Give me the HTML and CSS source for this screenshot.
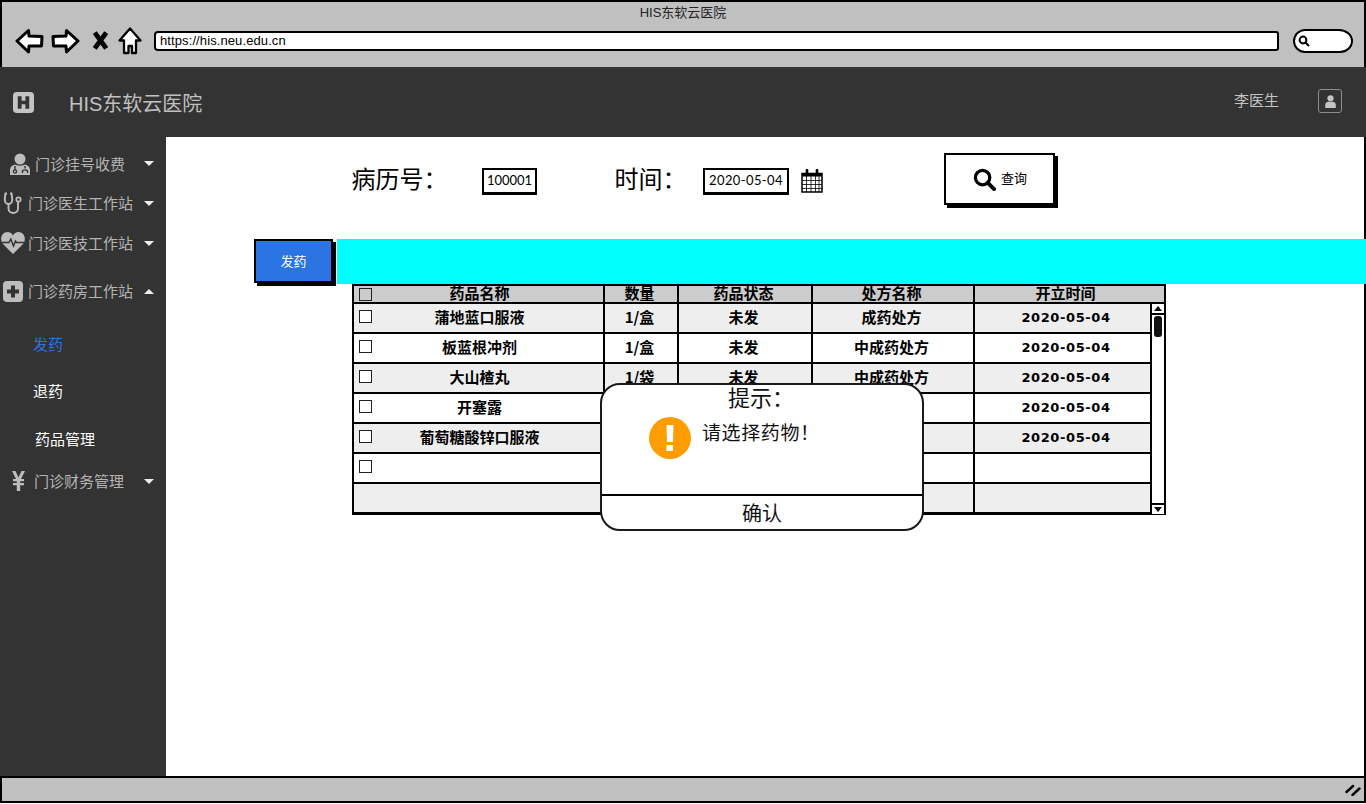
FILE: index.html
```html
<!DOCTYPE html>
<html lang="zh">
<head>
<meta charset="utf-8">
<title>HIS东软云医院</title>
<link rel="stylesheet" href="styles.css">
</head>
<body>
<div class="window">
  <div class="chrome">
    <div class="chrome-title">HIS东软云医院</div>
    <div class="chrome-bar">
      <svg class="c-icon c-arrow" viewBox="0 0 28 26"><path d="M1.500 13 13 2.500 13.500 8 26.500 8.500 26 18 13.500 18 13 24z" fill="#fff" stroke="#000" stroke-width="3" stroke-linejoin="round"/></svg>
      <svg class="c-icon c-arrow" viewBox="0 0 28 26"><path d="M26.500 13 15 2.500 14.500 8 1.500 8.500 2 18 14.500 18 15 24z" fill="#fff" stroke="#000" stroke-width="3" stroke-linejoin="round"/></svg>
      <svg class="c-icon c-x" viewBox="0 0 16 20"><path d="M2.500 2.500 13.500 17.500M13.500 2.500 2.500 17.500" stroke="#000" stroke-width="4.600" fill="none"/></svg>
      <svg class="c-icon c-home" viewBox="0 0 24 28"><path d="M12 1.500 1.500 13.500H6V26h4.500v-7h3.500v7H18V13.500h4.500z" fill="#fff" stroke="#000" stroke-width="2.300" stroke-linejoin="round"/></svg>
      <div class="url">https://his.neu.edu.cn</div>
      <div class="pill">
        <svg class="pill-icon" viewBox="0 0 12 12"><circle cx="5" cy="5" r="3.400" fill="none" stroke="#000" stroke-width="2"/><path d="M7.500 7.500 11 11" stroke="#000" stroke-width="2.200"/></svg>
      </div>
    </div>
  </div>

  <header class="topbar">
    <svg class="logo" viewBox="0 0 22 22"><rect width="22" height="22" rx="4" fill="#c4c4c4"/><path d="M5 4.500h4v4.700h4V4.500h4v13h-4v-4.600H9v4.600H5z" fill="#333"/></svg>
    <div class="brand">HIS东软云医院</div>
    <div class="user-name">李医生</div>
    <div class="user-box">
      <svg viewBox="0 0 16 18" class="user-icon"><circle cx="8" cy="5" r="3.800" fill="#c4c4c4"/><path d="M1.500 17v-4c0-2.500 2-3.800 3.800-3.800h5.400c1.800 0 3.800 1.300 3.800 3.800v4z" fill="#c4c4c4"/></svg>
    </div>
  </header>

  <div class="body">
    <nav class="sidebar">
      <div class="nav-item n1">
        <svg class="n-icon i-doc" viewBox="0 0 20 22"><circle cx="10" cy="6" r="5.500" fill="#bdbdbd"/><path d="M0 22v-5c0-3 2.500-5 5-5.500 2 1.500 8 1.500 10 0 2.500.5 5 2.500 5 5.500v5z" fill="#bdbdbd"/><path d="M5 13v4M15 13v2.500M12.500 20v-2c0-1.500 5-1.500 5 0v2" stroke="#333" stroke-width="1.400" fill="none"/><circle cx="5" cy="18.500" r="1.600" fill="none" stroke="#333" stroke-width="1.300"/></svg>
        <span class="nav-label">门诊挂号收费</span><i class="caret"></i>
      </div>
      <div class="nav-item n2">
        <svg class="n-icon i-steth" viewBox="0 0 20 23"><path d="M4 1.500H2.500C2 5 1 8 2.500 10.500c1.500 2 4.500 2 6 0C10 8 9 5 8.500 1.500H7" fill="none" stroke="#bdbdbd" stroke-width="1.900"/><path d="M5.500 12v4.500c0 6 9.500 6 9.500 0V10" fill="none" stroke="#bdbdbd" stroke-width="1.900"/><circle cx="15.500" cy="7.500" r="2.200" fill="none" stroke="#bdbdbd" stroke-width="1.700"/></svg>
        <span class="nav-label">门诊医生工作站</span><i class="caret"></i>
      </div>
      <div class="nav-item n3">
        <svg class="n-icon i-heart" viewBox="0 0 24 22"><path d="M12 22 2 12C-2 7 1 0 6.500 0 9 0 11 1.500 12 3.500 13 1.500 15 0 17.500 0 23 0 26 7 22 12z" fill="#bdbdbd"/><path d="M1 10.500h7l1.800-3.500 2.700 7 2-5 1 1.500h7.500" fill="none" stroke="#333" stroke-width="1.500"/></svg>
        <span class="nav-label">门诊医技工作站</span><i class="caret"></i>
      </div>
      <div class="nav-item n4">
        <svg class="n-icon i-plus" viewBox="0 0 20 21"><rect width="20" height="21" rx="4" fill="#bdbdbd"/><path d="M8 4.500h4v4h4v4h-4v4H8v-4H4v-4h4z" fill="#333"/></svg>
        <span class="nav-label">门诊药房工作站</span><i class="caret up"></i>
      </div>
      <div class="nav-item n5"><span class="sub active">发药</span></div>
      <div class="nav-item n6"><span class="sub">退药</span></div>
      <div class="nav-item n7"><span class="sub">药品管理</span></div>
      <div class="nav-item n8">
        <svg class="n-icon i-yen" viewBox="0 0 13 20"><path d="M0 0h3.500l3 6.500 3-6.500H13L9 8h3v2.300H8.200v1.700H12v2.300H8.200V20H4.800v-5.700H1V12h3.800v-1.700H1V8h3z" fill="#bdbdbd"/></svg>
        <span class="nav-label">门诊财务管理</span><i class="caret"></i>
      </div>
    </nav>

    <main class="main">
      <div class="search-row">
        <label class="field-label fl-id">病历号：</label>
        <div class="input in-id">100001</div>
        <label class="field-label fl-time">时间：</label>
        <div class="input in-date">2020-05-04</div>
        <svg class="cal" viewBox="0 0 22 24"><path d="M1 4.500h20V23H1z" fill="none" stroke="#000" stroke-width="1.500"/><path d="M1 4h20v3.500H1z" fill="#000"/><path d="M6 1v5M16 1v5" stroke="#000" stroke-width="2.600" stroke-linecap="round"/><path d="M1 11.500h20M1 15.500h20M1 19.500h20M5.500 7v16M10 7v16M14.500 7v16M18 7v16" stroke="#000" stroke-width=".8"/></svg>
        <button class="query">
          <svg class="q-icon" viewBox="0 0 24 24"><circle cx="10" cy="10" r="7.500" fill="none" stroke="#000" stroke-width="3.400"/><path d="M15.500 15.500 22 22" stroke="#000" stroke-width="4" stroke-linecap="round"/></svg>
          <span class="q-text">查询</span>
        </button>
      </div>

      <div class="action-row">
        <button class="dispense">发药</button>
        <div class="cyan"></div>
      </div>

      <div class="table">
        <div class="th name"><i class="box"></i>药品名称</div>
        <div class="th">数量</div>
        <div class="th">药品状态</div>
        <div class="th">处方名称</div>
        <div class="th th-last">开立时间</div>

        <div class="td name odd"><i class="box"></i>蒲地蓝口服液</div><div class="td odd">1/盒</div><div class="td odd">未发</div><div class="td odd">成药处方</div><div class="td date odd">2020-05-04</div>
        <div class="scroll">
          <div class="sb-btn"><i class="tri-up"></i></div>
          <div class="sb-track"><div class="thumb"></div></div>
          <div class="sb-btn down"><i class="tri-down"></i></div>
        </div>
        <div class="td name"><i class="box"></i>板蓝根冲剂</div><div class="td">1/盒</div><div class="td">未发</div><div class="td">中成药处方</div><div class="td date">2020-05-04</div>
        <div class="td name odd"><i class="box"></i>大山楂丸</div><div class="td odd">1/袋</div><div class="td odd">未发</div><div class="td odd">中成药处方</div><div class="td date odd">2020-05-04</div>
        <div class="td name"><i class="box"></i>开塞露</div><div class="td"></div><div class="td"></div><div class="td"></div><div class="td date">2020-05-04</div>
        <div class="td name odd"><i class="box"></i>葡萄糖酸锌口服液</div><div class="td odd"></div><div class="td odd"></div><div class="td odd"></div><div class="td date odd">2020-05-04</div>
        <div class="td name"><i class="box"></i></div><div class="td"></div><div class="td"></div><div class="td"></div><div class="td"></div>
        <div class="td name odd last"></div><div class="td odd last"></div><div class="td odd last"></div><div class="td odd last"></div><div class="td odd last"></div>
      </div>

      <div class="dialog">
        <div class="dlg-title">提示：</div>
        <div class="dlg-body">
          <svg class="warn" viewBox="0 0 42 42"><circle cx="21" cy="21" r="21" fill="#ff9d00"/><path d="M17.500 8h7l-.5 17h-6zM17.500 28h6.500v6h-6.500z" fill="#fff"/></svg>
          <div class="dlg-text">请选择药物！</div>
        </div>
        <div class="dlg-ok">确认</div>
      </div>
    </main>
  </div>

  <footer class="statusbar">
    <svg class="grip" viewBox="0 0 16 12"><path d="M1.500 8 8 2M7.500 11 14.500 4.500" stroke="#000" stroke-width="2.400" stroke-linecap="round"/></svg>
  </footer>
</div>
</body>
</html>
```

FILE: styles.css
```css
* { box-sizing: border-box; }
html, body { margin: 0; padding: 0; background: #fff; }
body { width: 1366px; height: 804px; overflow: hidden; font-family: "Noto Sans CJK SC", "Liberation Sans", sans-serif; }
.window { width: 1366px; height: 803px; display: flex; flex-direction: column; }

/* browser chrome */
.chrome { height: 67px; background: #c0c0c0; border: 2px solid #000; border-bottom: 0; flex: none; }
.chrome-title { height: 23px; text-align: center; font: 13px/22px "Liberation Sans", "Noto Sans CJK SC", sans-serif; color: #222; }
.chrome-bar { display: flex; align-items: center; height: 30px; padding: 1px 0 0 13px; }
.c-icon { flex: none; display: block; }
.c-arrow { width: 29px; height: 26px; margin-right: 7px; }
.c-x { width: 17px; height: 21px; margin: 0 9px 0 5px; }
.c-home { width: 24px; height: 28px; margin-right: 12px; }
.url { width: 1125px; height: 20px; background: #fff; border: 2px solid #000; border-radius: 4px 3px 3px 4px; font: 13px/15px "Liberation Sans", sans-serif; letter-spacing: .1px; color: #000; padding-left: 4px; flex: none; }
.pill { width: 60px; height: 24px; margin-left: 14px; background: #fff; border: 2px solid #000; border-radius: 12px 14px 13px 12px / 12px; flex: none; display: flex; align-items: center; padding-left: 3px; }
.pill-icon { width: 12px; height: 12px; }

/* header */
.topbar { height: 70px; background: #333; flex: none; display: flex; align-items: center; padding-left: 13px; }
.logo { width: 21px; height: 21px; flex: none; }
.brand { margin-left: 35px; margin-top: 4px; width: 1165px; font: 20px/28px "Liberation Sans", "Noto Sans CJK SC", sans-serif; color: #c0c0c0; flex: none; }
.user-name { width: 84px; margin-top: -5px; font-size: 15px; line-height: 20px; color: #c4c4c4; flex: none; }
.user-box { width: 24px; height: 24px; margin-top: -2px; border: 1.500px solid #8e8e8e; border-radius: 3px; flex: none; display: flex; align-items: center; justify-content: center; }
.user-icon { width: 13px; height: 15px; }

.body { flex: 1; display: flex; min-height: 0; }

/* sidebar */
.sidebar { width: 166px; background: #333; flex: none; padding-top: 6px; }
.nav-item { display: flex; align-items: center; }
.n1 { height: 41px; padding-left: 10px; }
.n2 { height: 38px; padding-left: 3px; }
.n3 { height: 42px; padding-left: 1px; }
.n4 { height: 54px; padding-left: 3px; }
.n5 { height: 52px; padding-left: 33px; }
.n6 { height: 42px; padding-left: 33px; }
.n7 { height: 54px; padding-left: 35px; }
.n8 { height: 30px; padding-left: 12px; }
.n-icon { flex: none; display: block; }
.i-doc { width: 20px; height: 22px; margin-right: 5px; }
.i-steth { width: 20px; height: 23px; margin-right: 5px; }
.i-heart { width: 24px; height: 22px; margin-right: 3px; }
.i-plus { width: 20px; height: 21px; margin-right: 5px; }
.i-yen { width: 13px; height: 20px; margin-right: 9px; }
.nav-label { font-size: 15px; line-height: 20px; color: #b4b4b4; flex: 1; white-space: nowrap; }
.sub { font-size: 15px; line-height: 20px; color: #fff; }
.sub.active { color: #2b74e4; }
.caret { flex: none; width: 0; height: 0; margin-right: 12px; border-left: 5px solid transparent; border-right: 5px solid transparent; border-top: 5px solid #eee; }
.caret.up { border-top: 0; border-bottom: 5px solid #eee; }

/* main */
.main { flex: 1; background: #fff; border-right: 2px solid #000; position: relative; min-width: 0; }
.search-row { height: 71px; padding: 16px 0 0 186px; display: flex; align-items: flex-start; margin-bottom: 31px; }
.field-label { font-size: 24px; line-height: 36px; color: #000; flex: none; margin: 7px 0 0 -.5px; white-space: nowrap; }
.fl-id { width: 130.5px; }
.fl-time { width: 88.5px; }
.input { flex: none; height: 26px; margin-top: 15px; border: 2px solid #000; background: #fff; font: 13px/21px "Lato", "Liberation Sans", sans-serif; color: #000; text-align: center; box-shadow: 0 1px 0 #000; white-space: nowrap; }
.in-id { width: 55px; margin-right: 78px; }
.in-date { width: 86px; margin-right: 12px; letter-spacing: .4px; }
.cal { width: 22px; height: 24px; flex: none; margin: 16px 121px 0 0; }
.query { width: 111px; height: 52px; flex: none; border: 2px solid #000; background: #fff; box-shadow: 3px 3px 0 #000; padding: 0 0 0 27px; display: flex; align-items: center; font: 13px/18px "Noto Sans CJK SC", sans-serif; color: #000; }
.q-icon { width: 23px; height: 23px; margin-right: 5px; }
.q-text { margin-top: -3px; }

.action-row { display: flex; height: 45px; margin-right: -2px; padding-left: 88px; }
.dispense { width: 79px; height: 44px; flex: none; background: #2b74e4; border: 2px solid #000; box-shadow: 3px 3px 0 #000; color: #fff; font: 13px/18px "Noto Sans CJK SC", sans-serif; padding: 0; }
.cyan { flex: 1; margin-left: 4px; background: #0ff; }

/* table */
.table { width: 814px; margin-left: 186px; display: grid; grid-template-columns: 251px 74px 134px 162px 177px 12px; grid-template-rows: 18px repeat(7, 30px); border: 2px solid #000; border-bottom-width: 1px; }
.th, .td { display: flex; align-items: center; justify-content: center; border-right: 2px solid #000; border-bottom: 2px solid #000; font-size: 15px; font-weight: 700; color: #000; white-space: nowrap; position: relative; min-width: 0; padding-right: 3px; }
.th { background: #ccc; line-height: 15px; padding-bottom: 4px; }
.th-last { grid-column: span 2; border-right: 0; padding-right: 8px; }
.td { background: #fff; line-height: 20px; padding-bottom: 2px; }
.td.odd { background: #eee; }
.td.date { font-family: "DejaVu Sans", sans-serif; font-size: 13px; letter-spacing: .6px; padding: 0 0 1px 7px; }
.th.name, .td.name { padding-right: 0; padding-left: 2px; }
.box { position: absolute; left: 5px; top: 6px; width: 13px; height: 13px; border: 1.500px solid #222; background: #fff; }
.th .box { top: 2px; background: transparent; }
.scroll { grid-column: 6; grid-row: 2 / span 7; display: flex; flex-direction: column; background: #fff; }
.sb-btn { height: 11px; flex: none; border-bottom: 2px solid #000; display: flex; align-items: center; justify-content: center; }
.sb-btn.down { border-bottom: 0; border-top: 2px solid #000; }
.sb-track { flex: 1; padding: 0 2px; }
.thumb { height: 21px; background: #111; border-radius: 3px; margin-top: 1px; }
.tri-up { width: 0; height: 0; border: 4px solid transparent; border-top: 0; border-bottom: 5px solid #000; }
.tri-down { width: 0; height: 0; border: 4px solid transparent; border-bottom: 0; border-top: 5px solid #000; }

/* dialog */
.dialog { position: absolute; left: 434px; top: 246px; width: 324px; height: 148px; background: #fff; border: 2px solid #1a1a1a; border-radius: 20px; display: flex; flex-direction: column; }
.dlg-title { height: 28px; flex: none; font-size: 22px; line-height: 23px; text-align: center; padding-right: 2px; color: #111; }
.dlg-body { flex: 1; display: flex; align-items: flex-start; padding: 4px 0 0 47px; }
.warn { width: 42px; height: 42px; flex: none; }
.dlg-text { margin: 4px 0 0 11px; font-size: 19px; line-height: 22px; letter-spacing: .6px; color: #111; white-space: nowrap; }
.dlg-ok { height: 35px; flex: none; border-top: 2px solid #000; font-size: 20px; line-height: 33px; text-align: center; color: #111; }

/* status bar */
.statusbar { height: 27px; flex: none; background: #c0c0c0; border: 2px solid #000; display: flex; align-items: center; justify-content: flex-end; padding-right: 3px; }
.grip { width: 16px; height: 12px; }
```
